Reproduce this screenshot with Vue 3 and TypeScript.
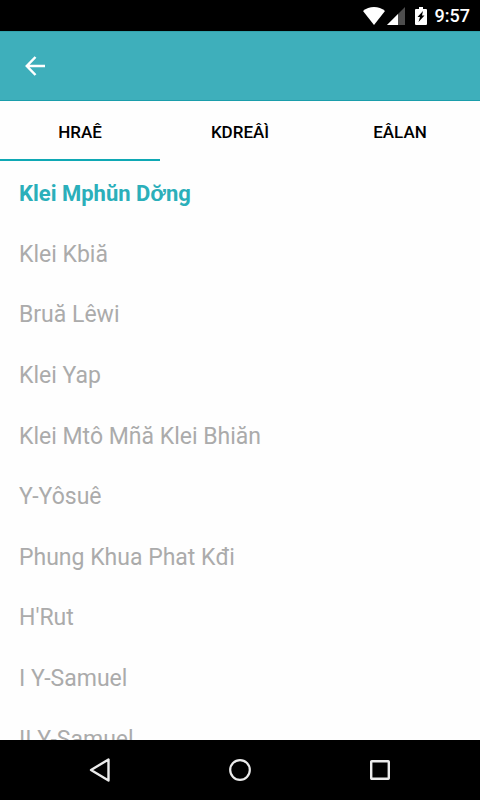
<script setup lang="ts">
import { ref } from 'vue'

const tabs: string[] = ['HRAÊ', 'KDREÂÌ', 'EÂLAN']
const books: string[] = [
  'Klei Mphŭn Dơ̆ng',
  'Klei Kbiă',
  'Bruă Lêwi',
  'Klei Yap',
  'Klei Mtô Mñă Klei Bhiăn',
  'Y-Yôsuê',
  'Phung Khua Phat Kđi',
  "H'Rut",
  'I Y-Samuel',
  'II Y-Samuel',
]

const activeTab = ref(0)
const activeBook = ref(0)
</script>

<template>
  <div class="screen">
    <div class="status">
      <svg class="wifi" width="22" height="18" viewBox="0 0 22 18" aria-hidden="true">
        <path d="M0 4C3 1.6 7 0 11 0s8 1.6 11 4L11 18z" fill="#fff" />
      </svg>
      <svg class="signal" width="18" height="18" viewBox="0 0 18 18" aria-hidden="true">
        <path d="M18 0v18H0z" fill="#4d4d4d" />
        <path d="M11 7v11H0z" fill="#fff" />
      </svg>
      <svg class="battery" width="12" height="18" viewBox="0 0 12 18" aria-hidden="true">
        <path d="M4 0h4v2h3q1 0 1 1v14q0 1-1 1H1q-1 0-1-1V3q0-1 1-1h3z" fill="#fff" />
        <path d="M8 4L2.500 10H5l-1.500 5L9.500 8.500H7z" fill="#000" />
      </svg>
      <time class="clock">9:57</time>
    </div>

    <header class="bar">
      <button class="back" type="button" aria-label="Back">
        <svg width="22" height="22" viewBox="0 0 22 22" aria-hidden="true">
          <path d="M11.500 2L2.800 11l8.700 9M3 11h18" fill="none" stroke="#fff" stroke-width="2.500" />
        </svg>
      </button>
    </header>

    <nav class="tabs" role="tablist">
      <button
        v-for="(tab, i) in tabs"
        :key="tab"
        type="button"
        role="tab"
        class="tab"
        :class="{ active: i === activeTab }"
        :aria-selected="i === activeTab"
        @click="activeTab = i"
      >
        {{ tab }}
      </button>
    </nav>

    <main class="content">
      <ul class="books">
        <li v-for="(book, i) in books" :key="book">
          <button
            type="button"
            class="book"
            :class="{ active: i === activeBook }"
            @click="activeBook = i"
          >
            {{ book }}
          </button>
        </li>
      </ul>
    </main>

    <nav class="system">
      <button type="button" aria-label="Navigate back">
        <svg width="28" height="28" viewBox="0 0 28 28" aria-hidden="true">
          <path d="M22.500 3.500v21L5 14z" fill="none" stroke="#ebebeb" stroke-width="2.400" stroke-linejoin="round" />
        </svg>
      </button>
      <button type="button" aria-label="Home">
        <svg width="28" height="28" viewBox="0 0 28 28" aria-hidden="true">
          <circle cx="14" cy="14" r="9.800" fill="none" stroke="#ebebeb" stroke-width="2.200" />
        </svg>
      </button>
      <button type="button" aria-label="Recent apps">
        <svg width="28" height="28" viewBox="0 0 28 28" aria-hidden="true">
          <rect x="5.200" y="5.200" width="17.600" height="17.600" rx="0.500" fill="none" stroke="#ebebeb" stroke-width="2.400" />
        </svg>
      </button>
    </nav>
  </div>
</template>

<style>
body {
  margin: 0;
}
</style>

<style scoped>
.screen {
  display: flex;
  flex-direction: column;
  height: 100vh;
  background: #fefefe;
  font-family: Roboto, sans-serif;
}

button {
  margin: 0;
  padding: 0;
  border: 0;
  background: none;
  font: inherit;
  cursor: pointer;
}

svg {
  display: block;
}

.status {
  display: flex;
  flex: none;
  align-items: center;
  justify-content: flex-end;
  height: 31px;
  padding-right: 10px;
  background: #000;
}

.signal {
  margin-left: 2px;
}

.battery {
  margin-left: 10px;
}

.clock {
  margin-left: 8px;
  color: #fff;
  font-size: 18px;
  font-weight: 500;
  line-height: 31px;
}

.bar {
  display: flex;
  flex: none;
  align-items: center;
  box-sizing: border-box;
  height: 70px;
  padding-left: 24px;
  border-top: 1px solid #32a3ad;
  border-bottom: 1px solid #1b9eab;
  background: #3eafbb;
}

.tabs {
  display: flex;
  flex: none;
  height: 60px;
}

.tab {
  flex: 1;
  padding-top: 4px;
  border-bottom: 2px solid transparent;
  color: #000;
  font-size: 17px;
  font-weight: 500;
}

.tab.active {
  border-bottom-color: #0fa8b4;
}

.content {
  flex: 1;
  min-height: 0;
  padding-top: 3px;
  overflow: hidden;
}

.books {
  display: grid;
  grid-template-rows: repeat(10, 1fr);
  min-height: 606px;
  margin: 0;
  padding: 0;
  list-style: none;
}

.book {
  display: block;
  width: 100%;
  height: 100%;
  padding: 0 19px;
  color: #ababab;
  font-size: 23px;
  line-height: 28px;
  text-align: left;
}

.book.active {
  color: #2bafba;
  font-size: 22px;
  font-weight: 700;
}

.system {
  display: flex;
  flex: none;
  align-items: center;
  justify-content: center;
  gap: 112px;
  height: 60px;
  background: #000;
}
</style>
